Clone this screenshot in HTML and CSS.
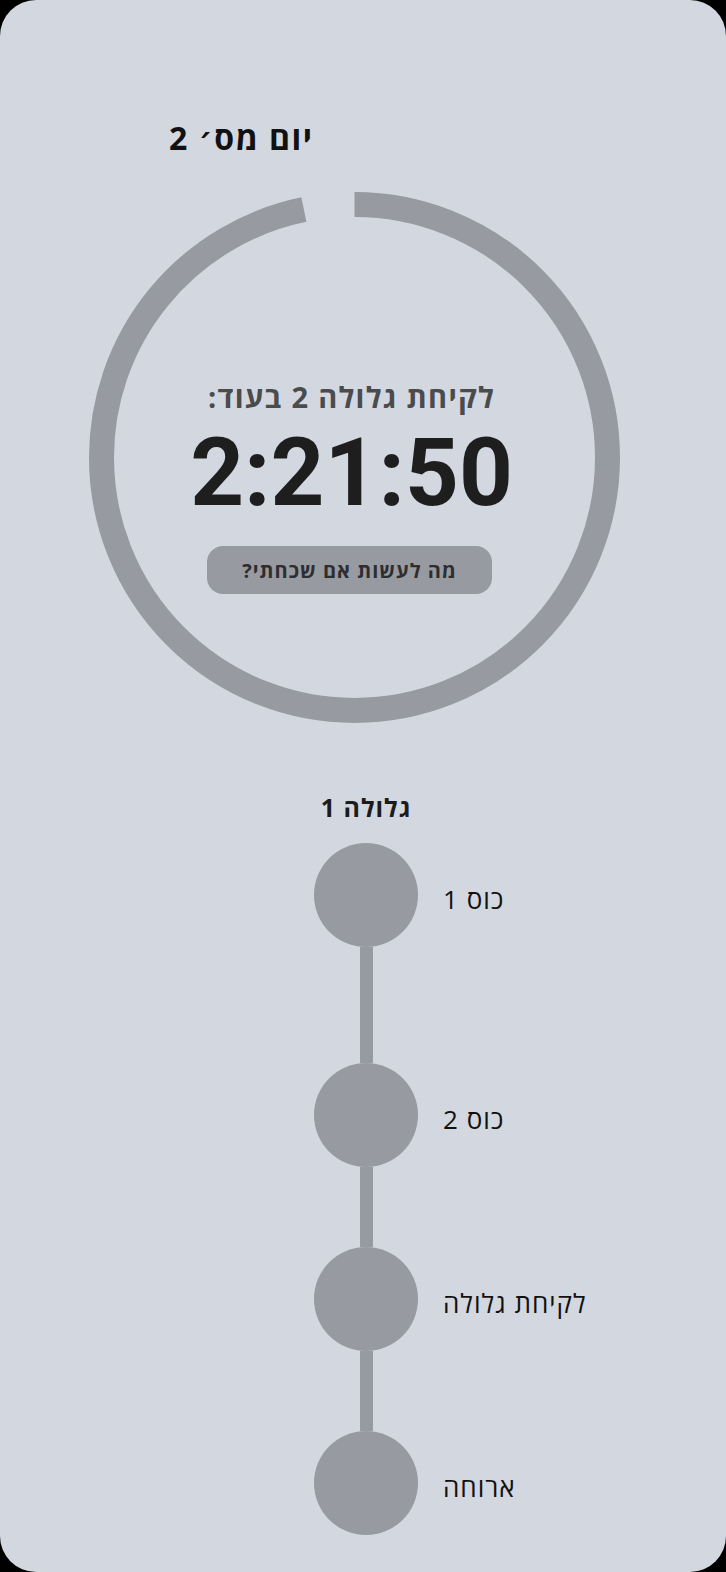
FILE: index.html
```html
<!DOCTYPE html>
<html lang="he" dir="rtl">
<head>
    <meta charset="UTF-8">
    <meta name="viewport" content="width=726">
    <title>גלולות</title>
    <link rel="stylesheet" href="styles.css">
</head>
<body>
    <div class="screen">
        <h1 class="day-title">יום מס׳ 2</h1>

        <div class="ring">
            <svg class="ring-svg" width="531" height="531" viewBox="0 0 531 531">
                <circle cx="265.5" cy="265.5" r="253" fill="none" stroke="#979aa1" stroke-width="25"
                        stroke-dasharray="1538 1600" transform="rotate(-90 265.5 265.5)"/>
            </svg>
            <div class="ring-content">
                <div class="next-label">לקיחת גלולה 2 בעוד:</div>
                <div class="countdown">2:21:50</div>
                <button class="forgot-btn">מה לעשות אם שכחתי?</button>
            </div>
        </div>

        <div class="timeline">
            <h2 class="timeline-title">גלולה 1</h2>

            <div class="step">
                <div class="dot"></div>
                <div class="step-label">כוס 1</div>
            </div>
            <div class="line line-long"></div>
            <div class="step">
                <div class="dot"></div>
                <div class="step-label">כוס 2</div>
            </div>
            <div class="line"></div>
            <div class="step">
                <div class="dot"></div>
                <div class="step-label">לקיחת גלולה</div>
            </div>
            <div class="line"></div>
            <div class="step">
                <div class="dot"></div>
                <div class="step-label">ארוחה</div>
            </div>
        </div>
    </div>
</body>
</html>
```

FILE: styles.css
```css
html, body {
    margin: 0;
    padding: 0;
    background: #000;
}
body {
    font-family: "Open Sans", Roboto, "DejaVu Sans", sans-serif;
}
.screen {
    width: 726px;
    height: 1572px;
    background: #d3d7df;
    border-radius: 36px;
    overflow: hidden;
    padding-top: 118px;
    box-sizing: border-box;
}
.day-title {
    margin: 0;
    padding-left: 169px;
    text-align: left;
    font-size: 32px;
    line-height: 40px;
    font-weight: 700;
    letter-spacing: 1.5px;
    color: #111;
}

/* countdown ring */
.ring {
    position: relative;
    width: 531px;
    height: 531px;
    margin-top: 34px;
    margin-left: 89px;
    margin-right: auto;
}
.ring-svg {
    position: absolute;
    top: 0;
    left: 0;
}
.ring-content {
    position: relative;
    display: flex;
    flex-direction: column;
    align-items: center;
    padding-top: 188px;
    padding-right: 6px;
}
.next-label {
    font-size: 29px;
    line-height: 34px;
    font-weight: 700;
    letter-spacing: 1.3px;
    color: #4a4b4d;
}
.countdown {
    margin-top: 11px;
    font-family: Roboto, sans-serif;
    font-size: 94px;
    line-height: 96px;
    font-weight: 700;
    color: #1e1e1e;
    direction: ltr;
}
.forgot-btn {
    margin-top: 25px;
    margin-right: 4px;
    width: 285px;
    height: 48px;
    border: none;
    border-radius: 16px;
    background: #979aa1;
    font-family: inherit;
    font-size: 20px;
    font-weight: 700;
    letter-spacing: 1px;
    color: #2e2e30;
    cursor: pointer;
}

/* pill timeline */
.timeline {
    margin-top: 69px;
    padding-left: 6px;
    display: flex;
    flex-direction: column;
    align-items: center;
}
.timeline-title {
    margin: 0 0 21px;
    font-size: 25px;
    line-height: 30px;
    font-weight: 700;
    letter-spacing: 1px;
    color: #1c1c1c;
}
.step {
    width: 100%;
    display: grid;
    grid-template-columns: 1fr 104px 1fr;
    align-items: center;
    direction: ltr;
}
.dot {
    grid-column: 2;
    width: 104px;
    height: 104px;
    border-radius: 50%;
    background: #979aa1;
}
.step-label {
    grid-column: 3;
    margin-left: 25px;
    padding-top: 8px;
    direction: rtl;
    text-align: left;
    font-size: 26px;
    letter-spacing: 1px;
    color: #111;
}
.line {
    width: 13px;
    height: 80px;
    background: #979aa1;
}
.line-long {
    height: 116px;
}
```
